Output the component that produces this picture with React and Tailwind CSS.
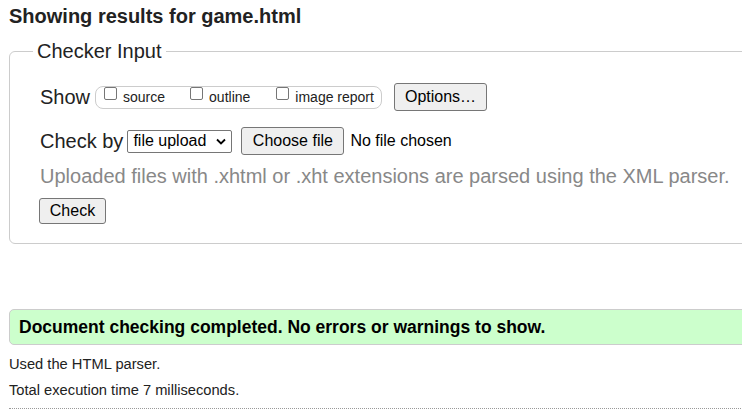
import React from 'react';

function Checkbox() {
  return (
    <span className="inline-block w-[13px] h-[13px] shrink-0 rounded-[2px] border border-[#767676] bg-white" />
  );
}

function Btn({ children, className = '' }) {
  return (
    <button
      type="button"
      className={`flex items-center justify-center rounded-[3px] border border-[#767676] bg-[#efefef] text-[16px] text-black ${className}`}
    >
      {children}
    </button>
  );
}

export default function App() {
  return (
    <div className="w-[742px] h-[417px] overflow-hidden bg-white font-['Liberation_Sans',Arial,sans-serif] text-[#222]">
      <h2 className="mt-[4px] ml-[9px] h-[24px] text-[20px] font-bold leading-[24px] text-[#222]">
        Showing results for game.html
      </h2>

      {/* Checker input form */}
      <fieldset className="mt-[12px] ml-[9px] w-[760px] rounded-[6px] border border-[#cccccc] pl-[30px] pb-[19px]">
        <legend className="ml-[-7px] px-[4px] text-[20px] leading-[23px]">Checker Input</legend>

        <div className="mt-[20px] flex h-[28px] items-center">
          <span className="text-[20px] leading-[24px]">Show</span>
          <div className="ml-[5px] flex h-[23px] w-[287px] items-center rounded-[8px] border border-[#cccccc] pl-[8px] text-[14px]">
            <span className="flex items-center">
              <span className="-mt-[4px]"><Checkbox /></span>
              <span className="ml-[6px]">source</span>
            </span>
            <span className="ml-[25px] flex items-center">
              <span className="-mt-[4px]"><Checkbox /></span>
              <span className="ml-[6px]">outline</span>
            </span>
            <span className="ml-[26px] flex items-center">
              <span className="-mt-[4px]"><Checkbox /></span>
              <span className="ml-[6px]">image report</span>
            </span>
          </div>
          <Btn className="ml-[12px] h-[28px] w-[93px]">Options…</Btn>
        </div>

        <div className="mt-[16px] flex h-[28px] items-center">
          <span className="text-[20px] leading-[24px]">Check by</span>
          <div className="ml-[4px] flex h-[23px] w-[105px] items-center justify-between rounded-[2px] border border-[#767676] bg-white pl-[5px] pr-[5px] text-[16px] text-black">
            <span>file upload</span>
            <svg width="10" height="7" viewBox="0 0 10 7" fill="none">
              <polyline points="1,1.5 5,5.5 9,1.5" stroke="#000" strokeWidth="1.8" />
            </svg>
          </div>
          <Btn className="ml-[9px] h-[28px] w-[103px]">Choose file</Btn>
          <span className="ml-[6px] text-[16px] text-black">No file chosen</span>
        </div>

        <p className="mt-[9px] h-[24px] text-[20px] leading-[24px] text-[#888888]">
          Uploaded files with .xhtml or .xht extensions are parsed using the XML parser.
        </p>

        <Btn className="mt-[10px] -ml-[1px] h-[26px] w-[67px]">Check</Btn>
      </fieldset>

      {/* Result */}
      <div className="mt-[65px] ml-[9px] flex h-[36px] w-[760px] items-center rounded-[5px] border border-[#cccccc] bg-[#ccffcc] pl-[9px]">
        <span className="text-[17.5px] font-bold text-black">
          Document checking completed. No errors or warnings to show.
        </span>
      </div>

      <p className="mt-[6px] ml-[9px] h-[26px] text-[14.7px] leading-[26px]">Used the HTML parser.</p>
      <p className="ml-[9px] h-[26px] text-[14.7px] leading-[26px]">Total execution time 7 milliseconds.</p>
      <div className="mt-[5px] ml-[9px] w-[760px] border-t border-dotted border-[#999999]" />
    </div>
  );
}
